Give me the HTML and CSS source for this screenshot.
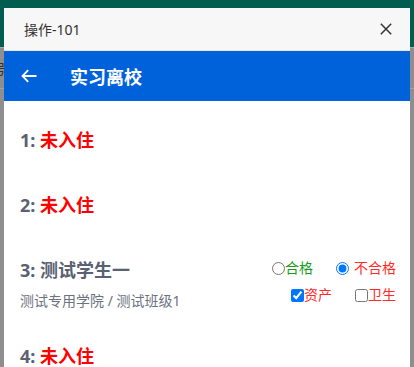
FILE: index.html
```html
<!DOCTYPE html>
<html lang="zh-CN">
<head>
<meta charset="utf-8">
<title>实习离校</title>
<link rel="stylesheet" href="styles.css">
</head>
<body>
<div class="page">
  <div class="page-header"></div>
  <div class="page-body">
    <div class="page-row"><span class="page-text">号</span></div>
  </div>
</div>

<div class="dialog">
  <div class="dialog-head">
    <span class="dialog-title">操作-101</span>
    <svg class="close" width="12" height="12" viewBox="0 0 12 12"><path d="M0.8 0.8 L11.2 11.2 M11.2 0.8 L0.8 11.2" stroke="#333" stroke-width="1.5" fill="none"/></svg>
  </div>
  <div class="bar">
    <svg class="back" width="16" height="14" viewBox="0 0 16 14"><path d="M15.5 7 H1.8 M7.2 1.2 L1.5 7 L7.2 12.8" stroke="#fff" stroke-width="1.8" fill="none"/></svg>
    <span class="bar-title">实习离校</span>
  </div>
  <div class="list">
    <div class="item">
      <div class="item-main">
        <div class="item-title"><span class="num">1:</span> <span class="status">未入住</span></div>
      </div>
    </div>
    <div class="item">
      <div class="item-main">
        <div class="item-title"><span class="num">2:</span> <span class="status">未入住</span></div>
      </div>
    </div>
    <div class="item has-detail">
      <div class="item-main">
        <div class="item-title"><span class="num">3: 测试学生一</span></div>
        <div class="item-sub">测试专用学院 / 测试班级1</div>
      </div>
      <div class="checks">
        <div class="check-row">
          <label class="opt pass"><input type="radio" name="r3">合格</label>
          <label class="opt fail"><input type="radio" name="r3" class="spaced" checked>不合格</label>
        </div>
        <div class="check-row row2">
          <label class="opt fail"><input type="checkbox" checked>资产</label>
          <label class="opt fail"><input type="checkbox">卫生</label>
        </div>
      </div>
    </div>
    <div class="item">
      <div class="item-main">
        <div class="item-title"><span class="num">4:</span> <span class="status">未入住</span></div>
      </div>
    </div>
  </div>
</div>
</body>
</html>
```

FILE: styles.css
```css
* { box-sizing: border-box; }
html, body { margin: 0; padding: 0; }
body {
  width: 414px;
  height: 367px;
  overflow: hidden;
  position: relative;
  font-family: "Noto Sans", "Noto Sans CJK SC", sans-serif;
  background: #8e8e8e;
}
.page { width: 414px; height: 367px; }
.page-header { height: 48px; background: #005d50; border-bottom: 1px solid #a9a9a9; }
.page-body { background: #8e8e8e; height: 319px; }
.page-row {
  height: 41px;
  border-bottom: 1px solid #a3a3a3;
  display: flex;
  align-items: center;
  overflow: hidden;
}
.page-text { margin-left: -8px; font-size: 14px; color: #333; }

.dialog {
  position: absolute;
  left: 4px;
  top: 8px;
  width: 406px;
  height: 359px;
  background: #fff;
  overflow: hidden;
}
.dialog-head {
  height: 43px;
  background: #f7f7f7;
  border-bottom: 1px solid #e6e6e6;
  display: flex;
  align-items: center;
  justify-content: space-between;
  padding: 0 18px 0 20px;
}
.dialog-title { font-size: 14px; color: #333; }
.close { display: block; }

.bar {
  height: 50px;
  background: #0062db;
  display: flex;
  align-items: center;
  padding-left: 17px;
}
.back { display: block; margin-right: 33px; }
.bar-title { color: #fff; font-size: 18px; font-weight: 700; }

.list { display: flex; flex-direction: column; }
.item {
  display: flex;
  justify-content: space-between;
  padding: 24px 14px 11px 16px;
}
.item.has-detail { padding-bottom: 8px; }
.item-title {
  font-size: 18px;
  font-weight: 700;
  line-height: 30px;
  white-space: nowrap;
}
.num { color: #596173; }
.status { color: #ff0000; }
.item-sub {
  font-size: 14px;
  line-height: 14px;
  margin-top: 9px;
  color: #6b7280;
}

.checks {
  display: flex;
  flex-direction: column;
  align-items: flex-end;
}
.check-row {
  display: flex;
  align-items: center;
  height: 26px;
  gap: 23px;
}
.check-row.row2 { height: 28px; }
.opt {
  display: flex;
  align-items: center;
  font-size: 14px;
  line-height: 16px;
}
.opt input { margin: 0; width: 13px; height: 13px; }
.opt input.spaced { margin-right: 5px; }
.pass { color: #1a9a1a; }
.fail { color: #ff2a2a; }
```
